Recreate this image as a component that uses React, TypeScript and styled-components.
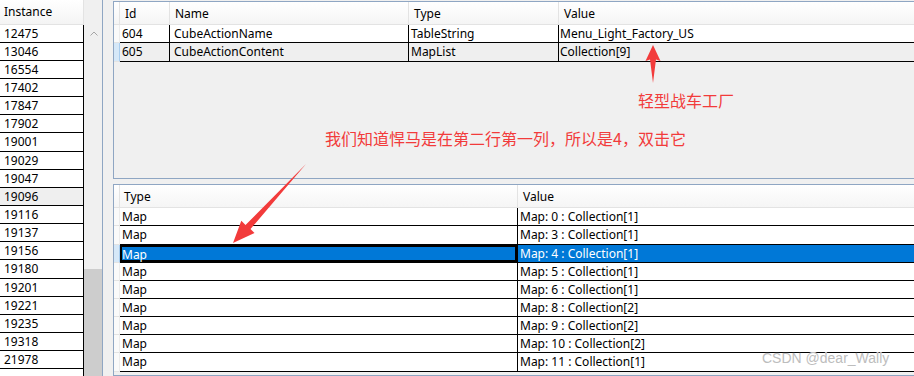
import React from "react";
import styled, { createGlobalStyle } from "styled-components";

const GlobalStyle = createGlobalStyle`
  html, body {
    margin: 0;
    padding: 0;
    background: #f0f0f0;
  }
  body {
    font-family: "Noto Sans", "Noto Sans CJK SC", sans-serif;
    font-size: 12px;
    color: #000;
  }
`;

const ROW = 18.15;

const instances = [
  "12475", "13046", "16554", "17402", "17847", "17902", "19001", "19029", "19047",
  "19096", "19116", "19137", "19156", "19180", "19201", "19221", "19235", "19318", "21978", "",
];

const fields = [
  { id: "604", name: "CubeActionName", type: "TableString", value: "Menu_Light_Factory_US" },
  { id: "605", name: "CubeActionContent", type: "MapList", value: "Collection[9]" },
];

const maps = [
  { key: 0, count: 1 },
  { key: 3, count: 1 },
  { key: 4, count: 1 },
  { key: 5, count: 1 },
  { key: 6, count: 1 },
  { key: 8, count: 2 },
  { key: 9, count: 2 },
  { key: 10, count: 2 },
  { key: 11, count: 1 },
];

const TOP_COLS = "6px 50px 239px 150px 1fr";
const BOTTOM_COLS = "6px 398px 1fr";

const App = () => {
  return (
    <>
      <GlobalStyle />
      <Screen>
        <InstancePanel>
          <InstanceList>
            <ListHeader>Instance</ListHeader>
            {instances.map((n, i) => (
              <ListRow key={i} $muted={n === "19096"}>{n}</ListRow>
            ))}
          </InstanceList>
          <ScrollTrack>
            <ScrollCorner />
            <ScrollButton>
              <svg width="8" height="5" viewBox="0 0 8 5">
                <path d="M0.5 4.5 L4 1 L7.5 4.5" fill="none" stroke="#a6a6a6" strokeWidth="1" />
              </svg>
            </ScrollButton>
            <Thumb />
          </ScrollTrack>
        </InstancePanel>

        <RightColumn>
          <GridPanel $height={178}>
            <GridHeader $cols={TOP_COLS}>
              <HeaderCell />
              <HeaderCell>Id</HeaderCell>
              <HeaderCell>Name</HeaderCell>
              <HeaderCell>Type</HeaderCell>
              <HeaderCell $last>Value</HeaderCell>
            </GridHeader>
            {fields.map((f, i) => (
              <GridRow key={f.id} $cols={TOP_COLS}>
                <RowHead $active={i === 1} />
                <Cell $tone={i === 1 ? "muted" : "plain"}>{f.id}</Cell>
                <Cell $tone={i === 1 ? "muted" : "plain"} $pad={4}>{f.name}</Cell>
                <Cell $tone={i === 1 ? "muted" : "plain"}>{f.type}</Cell>
                <Cell $tone={i === 1 ? "muted" : "plain"} $last $pad={1}>{f.value}</Cell>
              </GridRow>
            ))}
          </GridPanel>

          <GridPanel>
            <GridHeader $cols={BOTTOM_COLS}>
              <HeaderCell />
              <HeaderCell $pad={4}>Type</HeaderCell>
              <HeaderCell $last>Value</HeaderCell>
            </GridHeader>
            {maps.map((m) => {
              const sel = m.key === 4;
              return (
                <GridRow key={m.key} $cols={BOTTOM_COLS}>
                  <RowHead $active={sel} />
                  <Cell $tone={sel ? "selected" : "plain"} $focus={sel}>Map</Cell>
                  <Cell $tone={sel ? "selected" : "plain"} $last>
                    Map: {m.key} : Collection[{m.count}]
                  </Cell>
                </GridRow>
              );
            })}
          </GridPanel>
        </RightColumn>

        <Overlay>
          <svg width="914" height="376" viewBox="0 0 914 376">
            <polygon
              points="653,45 660.5,61 656,59.5 653,83 650,59.5 645.5,61"
              fill="#f23b3b"
            />
            <polygon
              points="306,164 250.5,229 254.5,233 233,243 241.3,220.8 245.5,225"
              fill="#f23b3b"
            />
          </svg>
          <Note $left={638} $top={91}>轻型战车工厂</Note>
          <Note $left={325} $top={129}>我们知道悍马是在第二行第一列，所以是4，双击它</Note>
          <Watermark>CSDN @dear_Wally</Watermark>
        </Overlay>
      </Screen>
    </>
  );
};

const Screen = styled.div`
  position: relative;
  display: flex;
  width: 914px;
  height: 376px;
  overflow: hidden;
  background: #f0f0f0;
`;

const InstancePanel = styled.div`
  display: flex;
  width: 103px;
  flex-shrink: 0;
  border-right: 1px solid #8fa6c3;
  box-sizing: border-box;
`;

const InstanceList = styled.div`
  display: flex;
  flex-direction: column;
  width: 84px;
  background: #fff;
`;

const ListHeader = styled.div`
  height: 24.6px;
  flex-shrink: 0;
  box-sizing: border-box;
  padding-left: 4px;
  display: flex;
  align-items: center;
  background: linear-gradient(#ffffff, #f4f4f4);
  border-bottom: 1px solid #e3e3e3;
  border-right: 1px solid #e3e3e3;
`;

const ListRow = styled.div<{ $muted?: boolean }>`
  height: ${ROW}px;
  flex-shrink: 0;
  box-sizing: border-box;
  padding-left: 4px;
  line-height: 18px;
  border-bottom: 1px solid #000;
  border-right: 1px solid #000;
  background: ${(p) => (p.$muted ? "#efefef" : "#fff")};
`;

const ScrollTrack = styled.div`
  display: flex;
  flex-direction: column;
  width: 18px;
  background: #f0f0f0;
`;

const ScrollCorner = styled.div`
  height: 25px;
  flex-shrink: 0;
`;

const ScrollButton = styled.div`
  height: 17px;
  flex-shrink: 0;
  display: flex;
  align-items: center;
  justify-content: center;
  padding-left: 1px;
`;

const Thumb = styled.div`
  margin-top: auto;
  height: 107px;
  flex-shrink: 0;
  background: #cdcdcd;
`;

const RightColumn = styled.div`
  flex: 1;
  display: flex;
  flex-direction: column;
  gap: 5px;
  padding: 1px 0 0 10px;
  min-width: 0;
`;

const GridPanel = styled.div<{ $height?: number }>`
  ${(p) => (p.$height ? `height: ${p.$height}px; flex-shrink: 0;` : "flex: 1;")}
  box-sizing: border-box;
  border: 1px solid #8fa6c3;
  border-right: none;
  background: #f0f0f0;
  overflow: hidden;
`;

const GridHeader = styled.div<{ $cols: string }>`
  display: grid;
  grid-template-columns: ${(p) => p.$cols};
  height: 23.3px;
  box-sizing: border-box;
  background: linear-gradient(#ffffff, #f5f5f5);
  border-bottom: 1px solid #e3e3e3;
`;

const HeaderCell = styled.div<{ $last?: boolean; $pad?: number }>`
  display: flex;
  align-items: center;
  padding-left: ${(p) => p.$pad ?? 5}px;
  border-right: ${(p) => (p.$last ? "none" : "1px solid #e3e3e3")};
  white-space: nowrap;
`;

const GridRow = styled.div<{ $cols: string }>`
  display: grid;
  grid-template-columns: ${(p) => p.$cols};
  height: ${ROW}px;
`;

const RowHead = styled.div<{ $active?: boolean }>`
  box-sizing: border-box;
  background: ${(p) => (p.$active ? "#d6e8f8" : "#fafafa")};
  border-bottom: 1px solid #e3e3e3;
  border-right: 1px solid ${(p) => (p.$active ? "#a9cdee" : "#ececec")};
`;

const tones = {
  plain: { bg: "#fff", fg: "#000" },
  muted: { bg: "#efefef", fg: "#000" },
  selected: { bg: "#0078d7", fg: "#fff" },
};

const Cell = styled.div<{
  $tone: keyof typeof tones;
  $last?: boolean;
  $focus?: boolean;
  $pad?: number;
}>`
  box-sizing: border-box;
  padding-left: ${(p) => p.$pad ?? 2}px;
  line-height: 18px;
  white-space: nowrap;
  overflow: hidden;
  background: ${(p) => tones[p.$tone].bg};
  color: ${(p) => tones[p.$tone].fg};
  border-bottom: 1px solid #000;
  border-right: ${(p) => (p.$last ? "none" : "1px solid #000")};
  ${(p) =>
    p.$focus
      ? `box-shadow: inset 0 0 0 2px #000; border-top: 1px solid #000; margin-top: -1px; height: ${ROW + 1}px; line-height: 19px;`
      : ""}
`;

const Overlay = styled.div`
  position: absolute;
  inset: 0;
  pointer-events: none;

  svg {
    position: absolute;
    left: 0;
    top: 0;
  }
`;

const Note = styled.div<{ $left: number; $top: number }>`
  position: absolute;
  left: ${(p) => p.$left}px;
  top: ${(p) => p.$top}px;
  font-family: "Noto Sans CJK SC", "Noto Sans", sans-serif;
  font-size: 16px;
  line-height: 18px;
  color: #f23b3b;
  white-space: nowrap;
`;

const Watermark = styled.div`
  position: absolute;
  left: 762px;
  top: 350px;
  font-family: "Liberation Sans", Arial, sans-serif;
  font-size: 14px;
  color: #bdbdbd;
  text-shadow: 0 0 1px #fff;
`;

export default App;
